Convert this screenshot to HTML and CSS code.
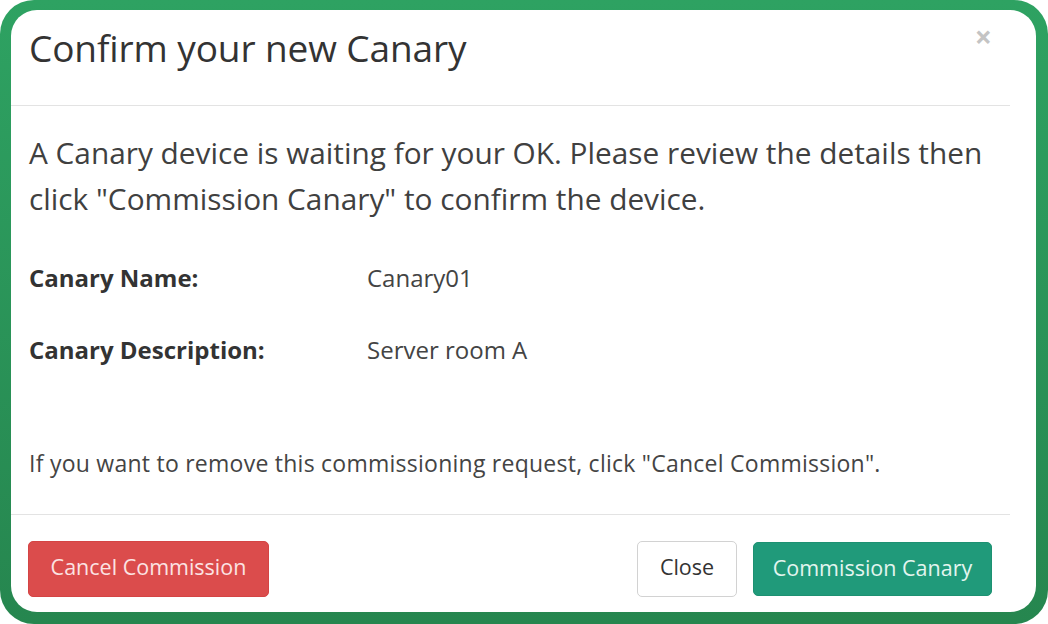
FILE: index.html
```html
<!DOCTYPE html>
<html>
<head>
<meta charset="utf-8">
<link rel="stylesheet" href="styles.css">
</head>
<body>
<div class="frame">
  <div class="card">
    <div class="modal">
      <div class="modal-header">
        <h1 class="title">Confirm your new Canary</h1>
        <span class="close-x">&times;</span>
      </div>
      <div class="modal-body">
        <p class="lead">A Canary device is waiting for your OK. Please review the details then<br>click "Commission Canary" to confirm the device.</p>
        <div class="details">
          <div class="label">Canary Name:</div>
          <div class="value">Canary01</div>
          <div class="label">Canary Description:</div>
          <div class="value">Server room A</div>
        </div>
        <p class="note">If you want to remove this commissioning request, click "Cancel Commission".</p>
      </div>
      <div class="modal-footer">
        <button class="btn btn-danger">Cancel Commission</button>
        <div class="right-btns">
          <button class="btn btn-default">Close</button>
          <button class="btn btn-success">Commission Canary</button>
        </div>
      </div>
    </div>
  </div>
</div>
</body>
</html>
```
FILE: styles.css
```css
* { box-sizing: border-box; }
html, body { margin: 0; padding: 0; background: #ffffff; }
body { font-family: "Open Sans", "Noto Sans", sans-serif; color: #333; }

.frame {
  width: 1048px;
  height: 624px;
  border-radius: 34px;
  background: linear-gradient(180deg, #2ea262 0%, #26864f 100%);
  padding: 10px 12px 12px 11px;
}
.card {
  width: 100%;
  height: 100%;
  background: #fff;
  border-radius: 26px;
  overflow: hidden;
}
.modal { width: 999px; }

.modal-header {
  height: 96px;
  border-bottom: 1px solid #e3e3e3;
  display: flex;
  justify-content: space-between;
  align-items: flex-start;
  padding: 0 18px;
}
.title {
  margin: 0;
  padding-top: 15px;
  font-size: 37px;
  line-height: 46px;
  font-weight: 400;
  color: #333;
  letter-spacing: -0.1px;
}
.close-x {
  margin-top: 12px;
  font-size: 30px;
  line-height: 30px;
  font-weight: 700;
  color: #c4c4c4;
}

.modal-body { padding: 24px 18px 0; }
.lead {
  margin: 0;
  font-size: 29.8px;
  line-height: 46px;
  color: #404040;
}
.details {
  display: grid;
  grid-template-columns: 338px auto;
  row-gap: 42px;
  margin-top: 41px;
  font-size: 24px;
  line-height: 30px;
  color: #333;
}
.label { font-weight: 700; }
.value { color: #444; }
.note {
  margin: 84px 0 0;
  font-size: 23px;
  line-height: 28px;
  color: #444;
  letter-spacing: 0.25px;
}

.modal-footer {
  margin-top: 37px;
  border-top: 1px solid #e3e3e3;
  padding: 26px 18px 0 17px;
  display: flex;
  justify-content: space-between;
}
.right-btns { display: flex; gap: 16px; }
.btn {
  font-family: "Open Sans", "Noto Sans", sans-serif;
  font-size: 21.5px;
  height: 56px;
  border-radius: 5px;
  border: 1px solid transparent;
  padding: 0 10px 5px;
  cursor: pointer;
}
.btn-danger { width: 241px; background: #db4c4c; border-color: #d44444; color: #fbe3e3; }
.btn-default { width: 100px; background: #fff; border-color: #d2d2d2; color: #333; }
.btn-success { width: 239px; background: #209a7a; border-color: #1d9172; color: #e3f5ef; height: 54px; margin-top: 1px; padding-bottom: 4px; }
```
